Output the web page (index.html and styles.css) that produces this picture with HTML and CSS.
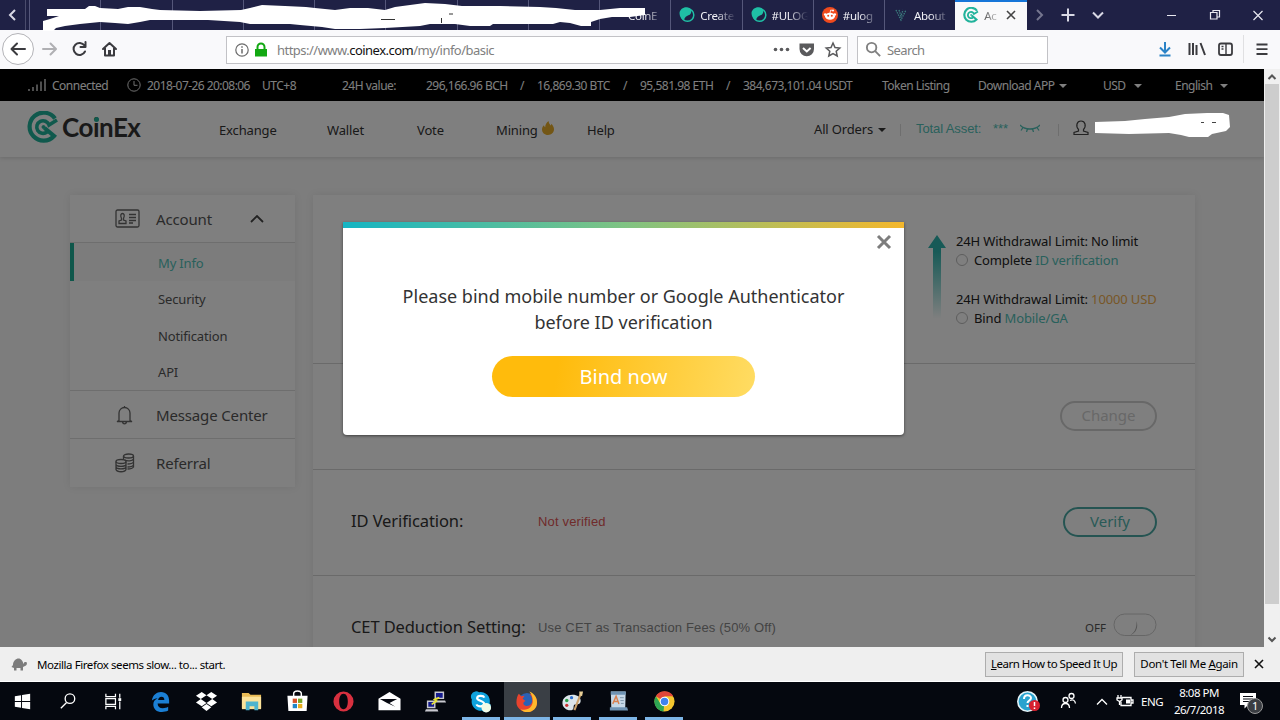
FILE: index.html
```html
<!DOCTYPE html>
<html lang="en">
<head>
    <meta charset="UTF-8">
    <meta name="viewport" content="width=device-width, initial-scale=1.0">
    <title>Account - CoinEx</title>
    <link rel="stylesheet" href="styles.css">
</head>
<body>

    <!-- Browser tabs -->
    <div class="tabs">
        <svg class="tabs-prev" viewBox="0 0 25 30"><path d="M15 10l-5 5 5 5"/></svg>
        <div class="tab-list">
            <div class="tab"></div>
            <div class="tab"></div>
            <div class="tab"></div>
            <div class="tab"></div>
            <div class="tab"></div>
            <div class="tab"></div>
            <div class="tab"></div>
            <div class="tab"></div>
            <div class="tab tab-plain"><span>CoinE</span></div>
            <div class="tab">
                <svg class="favicon" viewBox="0 0 16 16"><circle cx="8.500" cy="8" r="6.300" fill="none" stroke="#1fbfa5" stroke-width="1.500"/><path d="M.5 6C1 2 5-.5 9 .5c4 1 4 5 2 7-2 1.500-5 1-6 6C2 12 .5 9 .5 6z" fill="#1fbfa5"/></svg>
                <span>Create</span>
            </div>
            <div class="tab">
                <svg class="favicon" viewBox="0 0 16 16"><circle cx="8.500" cy="8" r="6.300" fill="none" stroke="#1fbfa5" stroke-width="1.500"/><path d="M.5 6C1 2 5-.5 9 .5c4 1 4 5 2 7-2 1.500-5 1-6 6C2 12 .5 9 .5 6z" fill="#1fbfa5"/></svg>
                <span>#ULOG</span>
            </div>
            <div class="tab">
                <svg class="favicon" viewBox="0 0 16 16"><circle cx="8" cy="8" r="8" fill="#f04a1d"/><ellipse cx="8" cy="9.300" rx="5" ry="3.500" fill="#fff"/><circle cx="3.200" cy="7.500" r="1.300" fill="#fff"/><circle cx="12.800" cy="7.500" r="1.300" fill="#fff"/><circle cx="11" cy="3.500" r="1" fill="#fff"/><path d="M8 6l.7-3 2 .5" fill="none" stroke="#fff" stroke-width=".8"/><circle cx="6.200" cy="8.700" r="1" fill="#f04a1d"/><circle cx="9.800" cy="8.700" r="1" fill="#f04a1d"/></svg>
                <span>#ulog</span>
            </div>
            <div class="tab">
                <svg class="favicon" viewBox="0 0 16 16"><path d="M3 3l5 10 5-10M6 3l2 6 2-6" fill="none" stroke="#3c7f80" stroke-width="1.300" stroke-dasharray="1.500 1"/></svg>
                <span>About</span>
            </div>
            <div class="tab active">
                <svg class="favicon" viewBox="0 0 32 32"><use href="#coinex"/></svg>
                <span>Ac</span>
                <svg class="tab-close" viewBox="0 0 10 10"><path d="M1 1l8 8M9 1l-8 8"/></svg>
            </div>
        </div>
        <svg class="tabs-tools" viewBox="0 0 254 30">
            <path d="M11 10l5 5-5 5" stroke="#75768f"/>
            <path d="M42 8.500v13M35.500 15h13" stroke="#d8d8e4"/>
            <path d="M67 12.500l5 5 5-5" stroke="#d8d8e4"/>
            <path d="M141 15.500h9M184.500 12.500h6.500v6.500h-6.500zM187 12v-1.500h6.500v6.500h-2" stroke="#e8e8f0" stroke-width="1.200"/>
            <path d="M227.500 11l9 9M236.500 11l-9 9" stroke="#e8e8f0" stroke-width="1.200"/>
        </svg>
        <svg class="scribble scribble-tabs" viewBox="40 0 610 32">
            <path fill="#fff" d="M47 9H85L89 6H95L100 8 118 9 128 7 140 7 152 9 160 10 200 11 241 10 250 8 262 5 285 6 306 7 315 8 335 10 350 8 368 8 385 10 395 7 410 5 425 3 445 4 462 6 500 6 540 7 556 8 575 10 600 10 620 8 645 8V15L630 17 612 17 600 19 591 22V26H581L570 23 560 22 553 24H530L493 24 490 26 470 26 455 24 430 24 420 26 385 28 360 29H335L322 27 300 25 290 24H250L240 22 208 20 175 20 150 20 140 22 128 24 115 23 100 22 80 24 65 26 56 28 53 31H43V21L50 19 59 16 47 16Z"/>
            <path d="M381 19.500h14M449 14h4M441.500 18v5" stroke="#333" fill="none"/>
        </svg>
    </div>

    <!-- Address bar -->
    <div class="toolbar">
        <svg class="nav-icons" viewBox="0 0 226 39">
            <circle cx="18" cy="19" r="15.500" fill="#fff" stroke="#b4b4b8"/>
            <g fill="none" stroke="#3b3b3f" stroke-width="2" stroke-linecap="round" stroke-linejoin="round">
                <path d="M12 19h13M17 13.500l-5.500 5.500 5.500 5.500"/>
                <path d="M43 19h12M50.500 13.500l5.500 5.500-5.500 5.500" stroke="#b0b0b3"/>
                <path d="M84.500 15.500a6 6 0 1 0 .5 6M85.500 12v5h-5"/>
                <path d="M103 19l6.500-6 6.500 6M105 18v7.500h9V18"/>
            </g>
            <path d="M108 20h3v6h-3z" fill="#3b3b3f"/>
        </svg>
        <div class="url-box">
            <svg class="url-id" viewBox="0 0 34 18">
                <circle cx="8" cy="9" r="6.200" fill="none" stroke="#6b6b6b" stroke-width="1.200"/>
                <path d="M8 8v4.500M8 5.300v1.500" stroke="#6b6b6b" stroke-width="1.500"/>
                <path d="M21 8h12v7.500H21z" fill="#12a812"/>
                <path d="M23.500 9V6a3.500 3.500 0 0 1 7 0v3" fill="none" stroke="#12a812" stroke-width="2"/>
            </svg>
            <span class="url">https://www.<b>coinex.com</b>/my/info/basic</span>
            <svg class="url-actions" viewBox="0 0 72 20">
                <circle cx="5.500" cy="9.500" r="1.800"/><circle cx="11.500" cy="9.500" r="1.800"/><circle cx="17.500" cy="9.500" r="1.800"/>
                <path d="M29.500 3.500h14.500v5.500a7.200 7.200 0 0 1-14.500 0z"/>
                <path d="M33 8l3.800 3.500 3.800-3.500" fill="none" stroke="#fff" stroke-width="2"/>
                <path d="M63 3l2 4.500 4.800.5-3.600 3.200 1 4.800-4.200-2.500-4.200 2.500 1-4.800-3.600-3.200 4.800-.5z" fill="none" stroke="#5a5a5c" stroke-width="1.500"/>
            </svg>
        </div>
        <div class="search-box">
            <svg viewBox="0 0 18 18"><circle cx="7" cy="7" r="5" /><path d="M10.800 10.800l5.200 5.200"/></svg>
            <span>Search</span>
        </div>
        <svg class="toolbar-icons" viewBox="0 0 132 39">
            <path d="M17 12v10M12 17.500l5 5 5-5M11.500 25.500h11" stroke="#2b83c6" stroke-width="2"/>
            <path d="M41.500 13v12M45 13v12M48.500 15v10M52.500 13l4.500 12" stroke="#3b3b3f" stroke-width="2"/>
            <rect x="71" y="13.500" width="13" height="11.500" rx="2" stroke="#3b3b3f" stroke-width="1.800"/>
            <path d="M78 13v12M73.500 16.500h2M73.500 19h2" stroke="#3b3b3f" stroke-width="1.400"/>
            <path d="M95.500 5v28" stroke="#e0e0e2"/>
            <path d="M108.500 14.500h11M108.500 19.200h11M108.500 24h11" stroke="#3b3b3f" stroke-width="1.800"/>
        </svg>
    </div>

    <!-- Page -->
    <div class="viewport">
        <div class="page">
            <div class="topbar">
                <svg class="signal" viewBox="0 0 18 14"><path d="M1 13v-2M5 13v-4M9 13V6.500M13 13V3.500M17 13V1"/></svg>
                <span class="connected">Connected</span>
                <svg class="clock" viewBox="0 0 14 14"><circle cx="7" cy="7" r="6.200"/><path d="M7 3v4.300h3.500"/></svg>
                <span class="date">2018-07-26 20:08:06</span>
                <span>UTC+8</span>
                <span>24H value:</span>
                <span>296,166.96 BCH</span>
                <span>/</span>
                <span>16,869.30 BTC</span>
                <span>/</span>
                <span>95,581.98 ETH</span>
                <span>/</span>
                <span>384,673,101.04 USDT</span>
                <span>Token Listing</span>
                <span>Download APP<i class="caret"></i></span>
                <span>USD<i class="caret wide"></i></span>
                <span>English<i class="caret wide"></i></span>
            </div>

            <div class="header">
                <a class="logo">
                    <svg viewBox="0 0 32 32">
                        <g id="coinex" fill="none" stroke="#21b39b">
                            <path d="M28 7.500A14 14 0 1 0 27 25L17.500 17" stroke-width="4.200"/>
                            <path d="M30 9L22 14A6.300 6.300 0 1 0 20 21" stroke-width="3.600"/>
                            <circle cx="16.500" cy="16" r="1.500" fill="#21b39b"/>
                        </g>
                    </svg>
                    <span>Co<em>i</em>nEx</span>
                </a>
                <a>Exchange</a>
                <a>Wallet</a>
                <a>Vote</a>
                <a class="mining">Mining<svg viewBox="0 0 12 14"><path d="M6.500 0c.3 2.500 1.500 3 2 4.500.6-.4.800-1 .8-1.700C11 4.500 12 6.500 12 8.300 12 11.500 9.500 14 6 14S0 11.500 0 8.500c0-2 .8-3.300 2-4.300.2 1 .5 1.500 1.200 2C3.300 3.500 4.500 1.500 6.500 0z"/></svg></a>
                <a>Help</a>
                <a class="orders">All Orders<i class="caret"></i></a>
                <i class="bar"></i>
                <span class="asset">Total Asset:</span>
                <span class="stars">***</span>
                <svg class="eye" viewBox="0 0 20 8"><path d="M0 1c3 3.500 6 4 10 4s7-.5 10-4M3 3.500L1 6.500M7.500 5l-1 3M12.500 5l1 3M17 3.500l2 3"/></svg>
                <i class="bar"></i>
                <svg class="user" viewBox="0 0 16 16"><path d="M5.500 9.500C4 8 3.500 6 4 4c.5-2 2-3 4-3s3.500 1 4 3c.5 2 0 4-1.500 5.500v1.500l4.500 1.500V14.500H1v-2L5.500 11z"/></svg>
            </div>

            <div class="content">
                <div class="sidebar">
                    <div class="menu-item">
                        <svg viewBox="0 0 26 20"><rect x="1" y="1" width="23" height="17" rx="1.500"/><path d="M6.500 9.500C5 6 6 4.500 7.500 4.500S10 6 8.500 9.500v1.500l2.500 1v2.500H4V12l2.500-1zM14 5.500h7M14 8.500h7M14 11.500h7M14 14h4"/></svg>
                        <span>Account</span>
                        <svg class="chevron" viewBox="0 0 14 8"><path d="M1 7l6-6 6 6"/></svg>
                    </div>
                    <div class="submenu">
                        <a class="selected">My Info</a>
                        <a>Security</a>
                        <a>Notification</a>
                        <a>API</a>
                    </div>
                    <div class="menu-item">
                        <svg viewBox="0 0 26 20"><path d="M4 15.500V8a5.500 5.500 0 0 1 11 0v7.500l2 1H2zM7.500 17c.5 2.500 3.500 2.500 4 0M9.500 1v1.500"/></svg>
                        <span>Message Center</span>
                    </div>
                    <div class="menu-item">
                        <svg viewBox="0 0 26 20"><ellipse cx="13.500" cy="3" rx="5" ry="2"/><path d="M8.500 3v3M18.500 3v11c-1 1.500-3 2-6 2M18.500 6c-1 2-6 2.500-9 1M18.500 9c-1 1.500-3 2-6 2M18.500 12c-1 1.500-3 2-6 2"/><ellipse cx="6" cy="8.500" rx="5" ry="2"/><path d="M1 8.500v8c1 3 9 3 10 0v-8M1 11.500c1 2.500 9 2.500 10 0M1 14c1 2.500 9 2.500 10 0"/></svg>
                        <span>Referral</span>
                    </div>
                </div>

                <div class="main">
                    <div class="row row-limits">
                        <svg class="arrow" viewBox="0 0 18 84">
                            <defs><linearGradient id="fade" x1="0" y1="0" x2="0" y2="1"><stop offset="0.200" stop-color="#2fb5ae"/><stop offset="1" stop-color="#2fb5ae" stop-opacity="0"/></linearGradient></defs>
                            <path d="M9 0l9 13h-5v71H5V13H0z" fill="url(#fade)"/>
                        </svg>
                        <div class="limits">
                            <p>24H Withdrawal Limit: No limit</p>
                            <p class="step"><i class="radio"></i>Complete <a>ID verification</a></p>
                            <p class="second">24H Withdrawal Limit: <b>10000 USD</b></p>
                            <p class="step"><i class="radio"></i>Bind <a>Mobile/GA</a></p>
                        </div>
                    </div>
                    <div class="row">
                        <span class="btn btn-off">Change</span>
                    </div>
                    <div class="row">
                        <span class="label">ID Verification:</span>
                        <span class="value danger">Not verified</span>
                        <span class="btn">Verify</span>
                    </div>
                    <div class="row">
                        <span class="label">CET Deduction Setting:</span>
                        <span class="value">Use CET as Transaction Fees (50% Off)</span>
                        <span class="off">OFF</span>
                        <svg class="switch" viewBox="0 0 44 24"><rect x="1" y="1" width="42" height="21.500" rx="10.700"/><path d="M23.500 8c2 6 0 12-7 14.500 4-2 7.500-6 7-14.500z"/></svg>
                    </div>
                </div>
            </div>

            <!-- Modal -->
            <div class="backdrop">
                <div class="modal">
                    <svg class="close" viewBox="0 0 16 16"><path d="M2 2l12 12M14 2L2 14"/></svg>
                    <p>Please bind mobile number or Google Authenticator<br>before ID verification</p>
                    <button type="button">Bind now</button>
                </div>
            </div>
            <svg class="scribble scribble-user" viewBox="0 0 138 26">
                <path fill="#fff" d="M1 9l30-1 20-2 24-2 16-3 22-1 16 0 6 2 1 12-4 4-14 3-4 3H95l-8-2-12-2-40 1-34-1z"/>
                <path d="M107 9.500h3M118 9.500h4" stroke="#444"/>
            </svg>
        </div>
        <div class="scrollbar">
            <svg viewBox="0 0 16 15"><path d="M4.500 10L8 6.500l3.500 3.500"/></svg>
            <div class="thumb"></div>
            <svg viewBox="0 0 16 15"><path d="M4.500 5.500L8 9l3.500-3.500"/></svg>
        </div>
    </div>

    <!-- Slow start notification -->
    <div class="notice">
        <svg class="turtle" viewBox="0 0 16 13"><path d="M2 7c0-4 3-6.500 5.500-6.500S12 3 12.500 6l1-2h2l.5 2-1 1.500L12 9v3.500H9.500V10h-4v2.500H3V10L.500 9z"/></svg>
        <span class="message">Mozilla Firefox seems slow... to... start.</span>
        <span class="notice-btn learn"><u>L</u>earn How to Speed It Up</span>
        <span class="notice-btn dont">Don't Tell Me <u>A</u>gain</span>
        <svg class="notice-close" viewBox="0 0 10 10"><path d="M1 1l8 8M9 1L1 9"/></svg>
    </div>

    <!-- Taskbar -->
    <div class="taskbar">
        <div class="task"><svg viewBox="0 0 24 24"><path fill="#fff" d="M4 6.500l6.500-1v6H4zM11.500 5.300L20 4v7.500h-8.500zM4 12.500h6.500v6L4 17.500zM11.500 12.500H20V20l-8.500-1.300z"/></svg></div>
        <div class="task"><svg viewBox="0 0 24 24"><g fill="none" stroke="#fff" stroke-width="1.400"><circle cx="13.500" cy="9" r="5"/><path d="M10 13l-6 6"/></g></svg></div>
        <div class="task"><svg viewBox="0 0 24 24"><g fill="none" stroke="#fff" stroke-width="1.300"><path d="M3 4v3h10V4M3 20v-3h10v3M3 9h10v6H3zM17.500 4v4M17.500 12v8"/></g><path fill="#fff" d="M16 8.500h3v3h-3z"/></svg></div>
        <div class="task"><svg viewBox="0 0 24 24"><path fill="#1b7fd4" d="M3 11C4 5 8 2 12.500 2 18 2 21 6 21 11v3H9c0 3 2 5 5.500 5 2 0 4-.5 5.500-1.500v4c-2 1-4 1.500-6.500 1.500C8 23 4.500 19.500 4.500 15c0-3 1.500-5 4.500-6.500-2.500 0-4.500 1-6 2.500zM9.500 10.500H16C16 8 15 7 13 7s-3.200 1.500-3.500 3.500z"/></svg></div>
        <div class="task"><svg viewBox="0 0 24 24"><path fill="#fff" d="M7 2l5 3.500L6 9.500 1 6zM17 2l6 4-5 3.500-6-4zM1 13l5-3.500 6 4L7 17zM23 13l-5-3.500-6 4 5 3.500zM7 18l5-3.500 5 3.500-5 4z"/></svg></div>
        <div class="task"><svg viewBox="0 0 24 24"><path fill="#e9bb55" d="M2 3h7l2 2h11v14H2z"/><path fill="#fbe29a" d="M2 7h20v13H2z"/><path fill="#4eb4ce" d="M6 12h13v9h-4v-4h-5v4H6z"/></svg></div>
        <div class="task"><svg viewBox="0 0 24 24"><path fill="none" stroke="#fff" stroke-width="1.500" d="M8 7V4c0-4 8-4 8 0v3"/><path fill="#fff" d="M1.500 6h21l-1 16h-19z"/><path fill="#d6532b" d="M7 9h4.500v4.500H7z"/><path fill="#77a72a" d="M12.500 9H17v4.500h-4.500z"/><path fill="#1f86c9" d="M7 14.500h4.500V19H7z"/><path fill="#e9ae1e" d="M12.500 14.500H17V19h-4.500z"/></svg></div>
        <div class="task"><svg viewBox="0 0 24 24"><path fill="#d8303f" fill-rule="evenodd" d="M12 1.500a10.500 10.500 0 1 1 0 21 10.500 10.500 0 0 1 0-21zM12 4c-3 0-4.500 3.500-4.500 8s1.500 8 4.500 8 4.500-3.500 4.500-8S15 4 12 4z"/></svg></div>
        <div class="task"><svg viewBox="0 0 24 24"><path fill="#fff" d="M.500 9L12 2l11.500 7v12H.500z"/><path fill="#05070f" d="M2 9.300l18 .2-8 4 6 4-8.500-4z"/></svg></div>
        <div class="task"><svg viewBox="0 0 24 24"><path fill="#c9c9d0" d="M11 1.500h10v8H11zM12 11h10l1 2H11zM3 11h9v8H3zM2 20h12l1 2.500H1z"/><path fill="#151b8d" d="M12.500 3h7v5h-7zM4.500 12.500h6v5h-6z"/><path d="M16 8l-5 2 2 1.500-5 3.500" fill="none" stroke="#e8e337" stroke-width="1.800"/></svg></div>
        <div class="task open"><svg viewBox="0 0 24 24"><path fill="#0fa2dc" d="M6.500 1.500a5.500 5.500 0 0 1 4 .8 9.500 9.500 0 0 1 11 11.500 5.500 5.500 0 0 1-8 7.700A9.500 9.500 0 0 1 3 10a5.500 5.500 0 0 1 3.500-8.500z"/><path d="M16 8c-1-2.500-7-2.500-7.500.5S16 11 15.800 14.500 8.500 17.500 8 15" fill="none" stroke="#fff" stroke-width="2.300"/><circle cx="18" cy="18.500" r="5" fill="#f4fbe6"/></svg></div>
        <div class="task open current"><svg viewBox="0 0 24 24"><circle cx="12.500" cy="12" r="9" fill="#2a61b5"/><path fill="#e8432e" d="M4 4l2.500 2.500L10 6l-2 3 3 2.500c-3 1-3 4 0 5 4 1 7-2 7-5.500 0-3-1-5-3-7 6 1 8 5 8 9 0 6-5 10-10.500 10S1.500 18.500 1.500 13c0-4 1-7 2.500-9z"/><path fill="#ffb92c" d="M15 1.500c5 2 8 6 8 11.500 0 6-4.500 10-10 10-3 0-5.500-1-7-3 7 2 12-2 12.500-7.500C19 8 17 4 15 1.500z"/></svg></div>
        <div class="task open"><svg viewBox="0 0 24 24"><path fill="#dce5ea" d="M12 5c5 0 8.500 2.500 8.500 6s-2 4-5 4-2 2-2.500 4-2 2.500-5 2C4 20 1.500 17 1.500 13.500 1.500 8.500 6 5 12 5z"/><circle cx="6" cy="11" r="1.800" fill="#2fa34d"/><circle cx="11" cy="8" r="1.700" fill="#2d6fd0"/><circle cx="6" cy="16" r="1.700" fill="#c33"/><path d="M21 3l-7 18" stroke="#caa06a" stroke-width="2.200"/><path d="M19.500 5.500L19 1.500h4l-1 5z" fill="#e9cf97"/></svg></div>
        <div class="task open"><svg viewBox="0 0 24 24"><path fill="#c6d8e8" d="M4 1.500h15.500L19 19H4.500z"/><path fill="#6f93b4" d="M4 1.500h15.500V5H4zM3 18h18l1 3.500H3z"/><path d="M6 14.500l3.500-8 3 8M7.500 12h4" fill="none" stroke="#d98150" stroke-width="1.500"/><path d="M13.500 8h4M14 11h3.500M14.500 14h3" stroke="#7d95aa"/></svg></div>
        <div class="task open"><svg viewBox="0 0 24 24"><circle cx="12" cy="12" r="10.500" fill="#f4c62e"/><path fill="#e0463a" d="M12 12L3 6.500a10.500 10.500 0 0 1 18.200 0H12z"/><path fill="#2ea653" d="M12 12l-1 10.500A10.500 10.500 0 0 1 3 6.500l5 8z"/><circle cx="12" cy="12" r="5" fill="#fff"/><circle cx="12" cy="12" r="3.900" fill="#3f83ee"/></svg></div>
        <div class="tray">
            <svg class="tray-icons" viewBox="0 0 130 38">
                <circle cx="13.500" cy="19.500" r="9.700" fill="#2aa3cf" stroke="#e4f3f8" stroke-width="1.600"/>
                <path d="M10 17c0-5 7-4.500 7-1 0 2.500-3.500 2.500-3.500 5M13.500 23v2" fill="none" stroke="#fff" stroke-width="2"/>
                <circle cx="20.500" cy="23.500" r="5.500" fill="#d7202f"/><path d="M20.500 20v4M20.500 25.500v1.500" stroke="#fff" stroke-width="1.500"/>
                <g fill="none" stroke="#fff" stroke-width="1.300">
                    <circle cx="51.500" cy="18" r="2.500"/><path d="M47.500 26c0-6 8-6 8 0"/><circle cx="57.500" cy="14" r="2.500"/><path d="M56 18.500c3-1.500 5 0 5.500 3"/>
                    <path d="M83 22.500l5-5 5 5"/>
                    <path d="M108 15.500h9v8h-10v-4M117.500 18h1.500v3h-1.500M104 13v3M107 13v3M103 16h5v2l-2.500 1.500-2.500-1.500zM105.500 19v4"/>
                </g>
                <path fill="#fff" d="M112 17.500h4v4h-4z"/>
            </svg>
            <span class="lang">ENG</span>
            <div class="time"><span>8:08 PM</span><span>26/7/2018</span></div>
            <div class="action-center">
                <svg viewBox="0 0 16 16"><path fill="#fff" d="M0 0h16v12H8l-3.500 3.500V12H0z"/><path d="M3 3.500h10M3 6h10M3 8.500h7" stroke="#05070f"/></svg>
                <span class="badge">1</span>
            </div>
        </div>
    </div>

</body>
</html>
```
FILE: styles.css
```css
* {
    margin: 0;
    padding: 0;
    box-sizing: border-box;
}

body {
    font-family: "Noto Sans", "Open Sans", sans-serif;
    display: flex;
    flex-direction: column;
    width: 1280px;
    height: 720px;
    overflow: hidden;
    white-space: nowrap;
}

svg {
    display: block;
    flex: none;
}

i {
    font-style: normal;
}

/* Tabs */
.tabs {
    position: relative;
    z-index: 2;
    display: flex;
    height: 30px;
    flex: none;
    background-color: #1f2145;
    font-size: 11.5px;
    color: #f1f1f6;
}

.tabs-prev {
    width: 26px;
    height: 30px;
    border-right: 1px solid #4a4c6c;
    fill: none;
    stroke: #d8d8e4;
    stroke-width: 2;
}

.tab-list {
    display: grid;
    grid-template-columns: repeat(14, 71.25px);
    width: 1000px;
    padding-left: 3px;
}

.tab {
    display: flex;
    align-items: center;
    gap: 5px;
    padding-left: 8px;
    border-left: 1px solid #55577a;
}

.tab span {
    flex: 1;
    letter-spacing: -0.3px;
    -webkit-mask-image: linear-gradient(to right, #000 16px, transparent 36px);
}

.tab-plain {
    padding-left: 28px;
}

.favicon {
    width: 16px;
    height: 16px;
}

.tab.active {
    background-color: #f9f9fa;
    border-top: 2px solid #1676d8;
    border-left: none;
    color: #555;
    padding-bottom: 2px;
}

.tab.active span {
    -webkit-mask-image: linear-gradient(to right, #000, transparent 18px);
}

.tab-close {
    width: 10px;
    height: 10px;
    margin-right: 11px;
    stroke: #444;
    stroke-width: 1.6;
}

.tabs-tools {
    width: 254px;
    height: 30px;
    fill: none;
    stroke-width: 2;
}

.scribble {
    position: absolute;
}

.scribble-tabs {
    left: 40px;
    top: 0;
    width: 610px;
    height: 32px;
}

/* Toolbar */
.toolbar {
    display: flex;
    align-items: center;
    height: 39px;
    flex: none;
    background-color: #f9f9fb;
    font-size: 13px;
    color: #808080;
}

.nav-icons {
    width: 226px;
    height: 39px;
}

.url-box {
    display: flex;
    align-items: center;
    width: 622px;
    height: 28px;
    padding-left: 7px;
    background-color: #fff;
    border: 1px solid #c2c2c6;
}

.url-id {
    width: 34px;
    height: 18px;
    margin-right: 9px;
}

.url {
    flex: 1;
    letter-spacing: -0.52px;
}

.url b {
    font-weight: normal;
    color: #111;
}

.url-actions {
    width: 72px;
    height: 20px;
    margin-right: 5px;
    fill: #5a5a5c;
}

.search-box {
    display: flex;
    align-items: center;
    gap: 5px;
    width: 191px;
    height: 28px;
    margin-left: 9px;
    padding-left: 7px;
    background-color: #fff;
    border: 1px solid #c2c2c6;
    letter-spacing: -0.6px;
}

.search-box svg {
    width: 17px;
    height: 17px;
    fill: none;
    stroke: #808080;
    stroke-width: 2;
}

.toolbar-icons {
    width: 132px;
    height: 39px;
    margin-left: 100px;
    fill: none;
}

/* Page */
.viewport {
    display: flex;
    height: 578px;
    flex: none;
}

.page {
    position: relative;
    width: 1264px;
    height: 578px;
    overflow: hidden;
    background-color: #fafafa;
}

.topbar {
    display: grid;
    grid-template-columns: 24px 75px 20px 115px 80px 84px 94px 17px 86px 17px 86px 17px 139px 96px 125px 72px 80px;
    align-items: center;
    height: 32px;
    padding-left: 28px;
    background-color: #000;
    color: #fff;
    font-size: 12px;
    letter-spacing: -0.5px;
}

.topbar svg {
    fill: none;
    stroke: #e0e0e0;
}

.topbar .date {
    letter-spacing: -0.55px;
}

.signal {
    width: 18px;
    height: 14px;
    stroke-width: 1.4;
}

.clock {
    width: 14px;
    height: 14px;
}

.caret {
    display: inline-block;
    margin-left: 5px;
    vertical-align: 2px;
    border: 4px solid transparent;
    border-top-color: currentColor;
    border-bottom: none;
}

.caret.wide {
    margin-left: 8px;
}

.header {
    display: grid;
    grid-template-columns: 191px 108px 90px 79px 91px 227px 86px 16px 77px 27px 38px 15px 16px;
    align-items: center;
    height: 56px;
    padding: 1px 0 0 28px;
    background-color: #fff;
    box-shadow: 0 1px 4px rgba(0, 0, 0, 0.15);
    color: #333;
    font-size: 13px;
    letter-spacing: -0.15px;
}

.logo {
    display: flex;
    align-items: center;
    gap: 3px;
    margin-top: -6px;
    font-family: Lato, sans-serif;
    font-size: 26px;
    font-weight: bold;
    letter-spacing: -0.5px;
}

.logo svg {
    width: 32px;
    height: 32px;
    margin-left: -1px;
}

.logo em {
    position: relative;
    font-style: normal;
}

.logo em::after {
    content: "";
    position: absolute;
    left: 1px;
    top: 6px;
    width: 5px;
    height: 5px;
    border-radius: 50%;
    background-color: #21b39b;
}

.mining {
    display: flex;
    gap: 4px;
}

.mining svg {
    width: 12px;
    height: 14px;
    fill: #e7ad2b;
}

.orders {
    margin-top: -2px;
}

.bar {
    width: 1px;
    height: 12px;
    background-color: #ddd;
}

.asset,
.stars {
    margin-top: -2px;
    font-family: "Liberation Sans", Arial, sans-serif;
    color: #52c2b8;
    letter-spacing: -0.1px;
}

.eye {
    width: 20px;
    height: 8px;
    margin-top: -3px;
    fill: none;
    stroke: #52c2b8;
    stroke-width: 1.3;
}

.user {
    width: 16px;
    height: 16px;
    margin-top: -3px;
    fill: none;
    stroke: #444;
    stroke-width: 1.2;
}

.scribble-user {
    left: 1094px;
    top: 44px;
    width: 138px;
    height: 26px;
}

.content {
    display: flex;
    align-items: flex-start;
    gap: 18px;
    padding: 38px 0 0 70px;
}

.sidebar {
    width: 225px;
    background-color: #fff;
    box-shadow: 0 0 8px rgba(0, 0, 0, 0.08);
    color: #555;
    font-size: 15px;
    letter-spacing: -0.15px;
}

.menu-item {
    display: flex;
    align-items: center;
    height: 47px;
    padding-left: 45px;
}

.menu-item svg {
    width: 26px;
    height: 20px;
    margin-right: 15px;
    fill: none;
    stroke: #666;
    stroke-width: 1.3;
}

.menu-item .chevron {
    width: 14px;
    height: 8px;
    margin: 0 0 0 38px;
    stroke: #444;
    stroke-width: 1.8;
}

.submenu {
    display: flex;
    flex-direction: column;
    height: 149px;
    border-top: 1px solid #ddd;
    border-bottom: 1px solid #ddd;
    font-size: 13px;
}

.submenu a {
    height: 36.5px;
    padding-left: 88px;
    line-height: 37px;
}

.submenu .selected {
    height: 38px;
    padding-left: 84px;
    border-left: 4px solid #1fae97;
    background-color: #f9f9f9;
    color: #52c2b8;
    line-height: 41px;
}

.menu-item:last-child {
    height: 49px;
    border-top: 1px solid #ddd;
}

.main {
    width: 882px;
    background-color: #fff;
    box-shadow: 0 0 8px rgba(0, 0, 0, 0.08);
}

.row {
    display: flex;
    align-items: center;
    height: 106px;
    padding: 0 38px 0 37px;
    border-bottom: 1px solid #d4d4d4;
}

.row-limits {
    align-items: flex-start;
    height: 169px;
    padding: 40px 0 0 615px;
}

.arrow {
    width: 18px;
    height: 84px;
    margin-right: 10px;
}

.limits {
    color: #222;
    font-size: 13px;
    line-height: 19px;
    letter-spacing: -0.13px;
    margin-top: -3px;
}

.limits .second {
    margin-top: 21px;
}

.limits .step {
    display: flex;
    align-items: center;
    line-height: 18px;
    white-space: pre;
}

.limits a {
    color: #52c2b8;
}

.limits b {
    font-weight: normal;
    color: #f0ae4e;
}

.radio {
    width: 12px;
    height: 12px;
    margin-right: 6px;
    border: 1px solid #bbb;
    border-radius: 50%;
}

.label {
    width: 187px;
    margin: -4px 0 0 1px;
    color: #333;
    font-size: 16.5px;
    letter-spacing: -0.1px;
}

.value {
    margin-top: -2px;
    color: #888;
    font-family: "Liberation Sans", Arial, sans-serif;
    font-size: 13px;
    letter-spacing: 0.16px;
}

.danger {
    color: #e05656;
}

.btn {
    width: 94px;
    height: 30px;
    margin: -1px 0 0 auto;
    border: 2px solid #4aa9a4;
    border-radius: 15px;
    color: #52b5ae;
    font-size: 15px;
    line-height: 25px;
    text-align: center;
}

.btn-off {
    width: 97px;
    border-color: #d0d0d0;
    color: #d0d0d0;
}

.off {
    margin: -3px 0 0 auto;
    color: #555;
    font-size: 11.5px;
}

.switch {
    width: 44px;
    height: 24px;
    margin: -7px 0 0 7px;
    fill: none;
    stroke: #ccc;
}

.switch path {
    fill: #aaa;
    stroke: none;
}

.backdrop {
    position: absolute;
    inset: 0;
    padding: 153px 0 0 343px;
    background-color: rgba(0, 0, 0, 0.5);
}

.modal {
    position: relative;
    width: 561px;
    height: 213px;
    padding: 61px 0 0;
    background: linear-gradient(to right, #15b5c3, #7fc383 50%, #f4b72c) top / 100% 6px no-repeat #fff;
    border-radius: 0 0 4px 4px;
    box-shadow: 0 1px 3px rgba(0, 0, 0, 0.5);
    color: #333;
    font-size: 18px;
    line-height: 26px;
    text-align: center;
}

.close {
    position: absolute;
    top: 12px;
    right: 12px;
    width: 16px;
    height: 16px;
    stroke: #7d7d7d;
    stroke-width: 3;
}

.modal button {
    width: 263px;
    height: 41px;
    margin-top: 21px;
    background: linear-gradient(100deg, #ffbb0c 25%, #ffdc63);
    border: none;
    border-radius: 21px;
    color: #fff;
    font-family: inherit;
    font-size: 20px;
}

.scrollbar {
    display: flex;
    flex-direction: column;
    width: 16px;
    background-color: #f0f0f0;
}

.scrollbar svg {
    width: 16px;
    height: 15px;
    fill: none;
    stroke: #555;
    stroke-width: 2;
}

.thumb {
    width: 14px;
    height: 520px;
    margin: 0 1px 28px;
    background-color: #cdcdcd;
}

/* Notification bar */
.notice {
    display: flex;
    align-items: center;
    height: 35px;
    flex: none;
    padding: 0 16px 0 11px;
    background-color: #efefef;
    border-bottom: 1px solid #fff;
    color: #000;
    font-size: 11.5px;
    letter-spacing: -0.42px;
}

.turtle {
    width: 16px;
    height: 13px;
    margin-right: 10px;
    fill: #7c7c7c;
}

.message {
    flex: 1;
}

.notice-btn {
    height: 25px;
    margin-right: 11px;
    background-color: #e2e2e2;
    border: 1px solid #adadad;
    line-height: 22px;
    text-align: center;
}

.learn {
    width: 138px;
    letter-spacing: -0.5px;
}

.dont {
    width: 110px;
    margin-right: 10px;
    letter-spacing: -0.35px;
}

.notice-close {
    width: 10px;
    height: 10px;
    stroke: #111;
    stroke-width: 1.6;
}

/* Taskbar */
.taskbar {
    display: flex;
    height: 38px;
    flex: none;
    background-color: #05080f;
    color: #fff;
}

.task {
    display: flex;
    align-items: center;
    justify-content: center;
    width: 45.8px;
    height: 38px;
}

.task svg {
    width: 23px;
    height: 23px;
}

.task.open {
    background: linear-gradient(#7db5e6, #7db5e6) bottom / 38px 3px no-repeat;
}

.task.open.current {
    background-color: #3a3f45;
    background-size: 46px 3px;
}

.tray {
    display: flex;
    align-items: center;
    margin-left: auto;
    padding-right: 24px;
    font-size: 11.5px;
    letter-spacing: -0.5px;
}

.tray-icons {
    width: 130px;
    height: 38px;
}

.lang {
    width: 29px;
    margin-left: -3px;
}

.time {
    display: flex;
    flex-direction: column;
    align-items: center;
    width: 58px;
    line-height: 17px;
}

.action-center {
    position: relative;
    margin-left: 12px;
}

.action-center svg {
    width: 16px;
    height: 16px;
}

.badge {
    position: absolute;
    left: 7px;
    top: 5px;
    width: 16px;
    height: 16px;
    border: 1px solid #999;
    border-radius: 50%;
    background-color: #3a3d42;
    font-size: 11px;
    line-height: 14px;
    text-align: center;
}
```
